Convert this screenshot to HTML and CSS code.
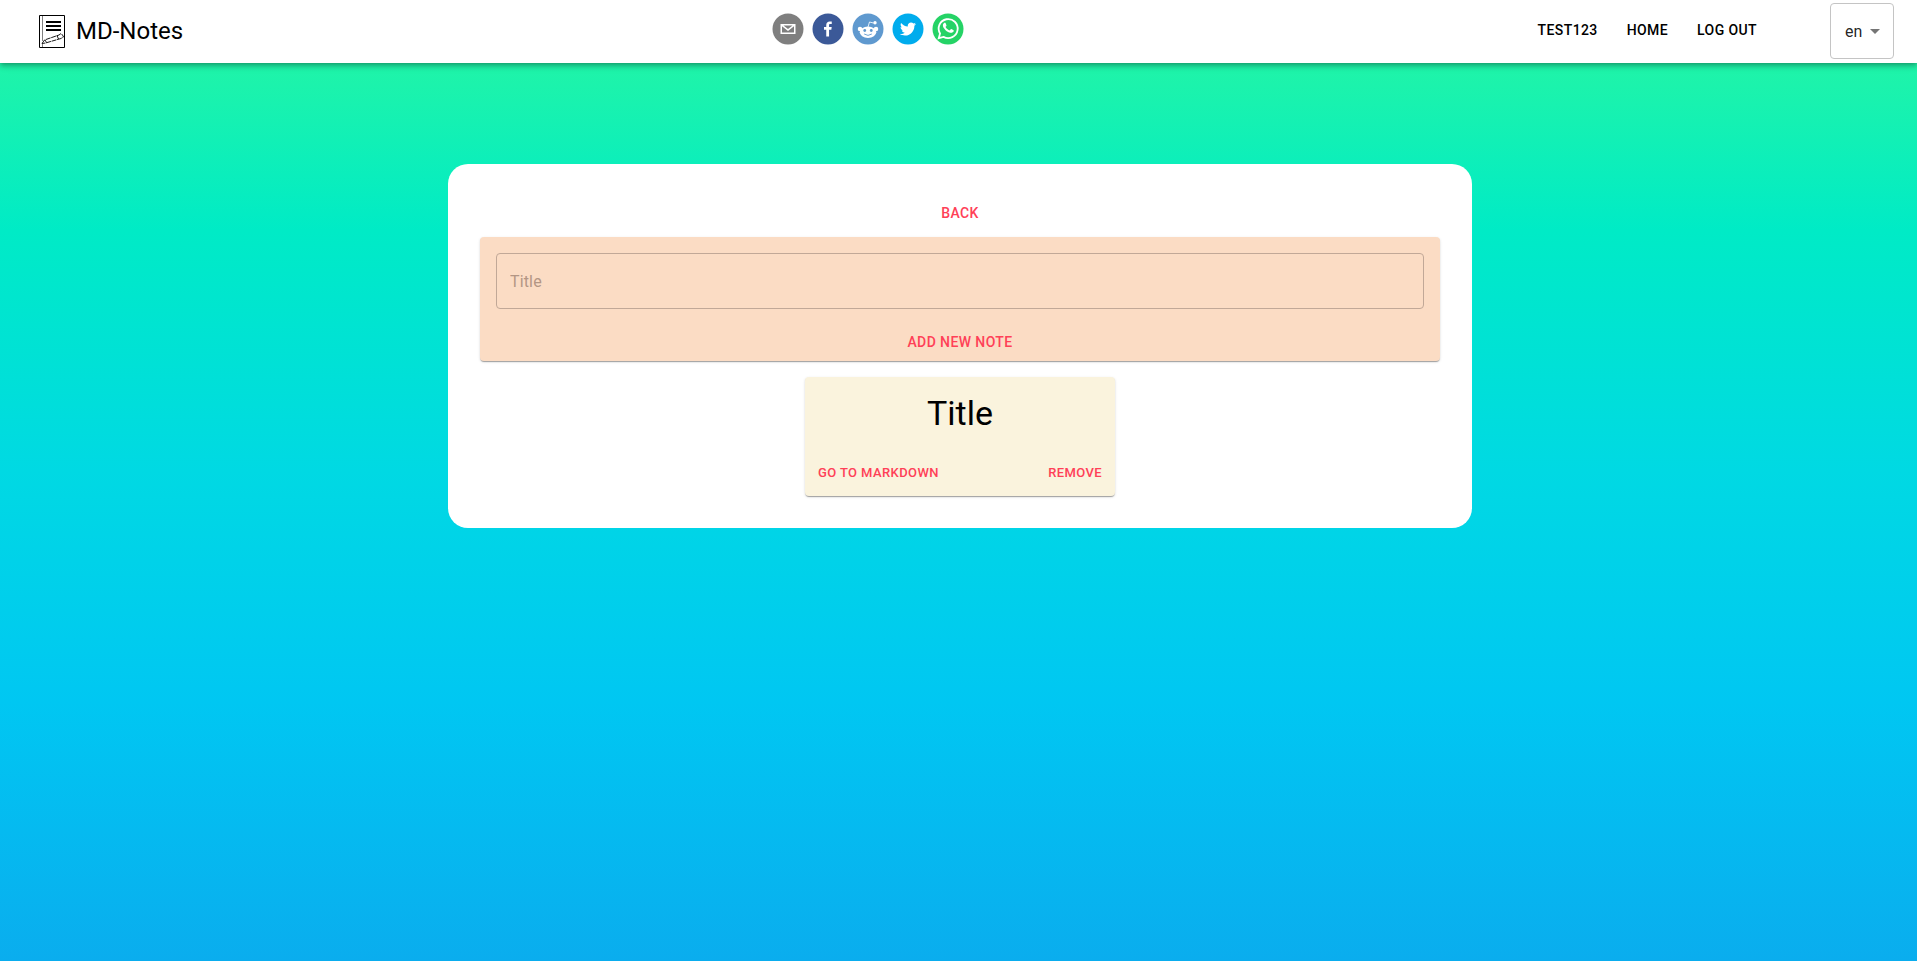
FILE: index.html
```html
<!DOCTYPE html>
<html lang="en">
<head>
<meta charset="utf-8">
<title>MD-Notes</title>
<link rel="stylesheet" href="styles.css">
</head>
<body>
<header class="bar">
  <a class="brand" href="#">
    <svg class="brand-logo" width="26" height="33" viewBox="0 0 26 33" fill="none" stroke="#000">
      <path d="M.5.5h25v32H.5z"/>
      <path d="M3.500 0v26M3.500 29v4" stroke-width=".5"/>
      <path d="M7 7h15M7 11h15M7 15h15" stroke-width="2"/>
      <path d="M3 28.500l2.500-3.500L20 20l2-1.500 1.500 1.500 1 2-2.500 1.500L6.500 28zM6 25l1.500 2.500M18 20.500l1.500 3.500" stroke-dasharray="5 .7" stroke-width=".9"/>
    </svg>
    <span>MD-Notes</span>
  </a>
  <div class="share">
    <button class="share-btn" aria-label="Email"><svg viewBox="0 0 64 64"><circle cx="32" cy="32" r="31" fill="#7f7f7f"/><path fill="#fff" d="M17 22v20h30V22H17zm24.100 3L32 32.100 22.900 25h18.200zM20 39V26.600l12 9.300 12-9.300V39H20z"/></svg></button>
    <button class="share-btn" aria-label="Facebook"><svg viewBox="0 0 64 64"><circle cx="32" cy="32" r="31" fill="#3b5998"/><path fill="#fff" d="M34.100 47V33.300h4.600l.7-5.300h-5.300v-3.400c0-1.500.4-2.600 2.600-2.600h2.800v-4.800c-.5-.1-2.200-.2-4.100-.2-4.100 0-6.900 2.500-6.900 7V28H24v5.300h4.500V47h5.600z"/></svg></button>
    <button class="share-btn" aria-label="Reddit"><svg viewBox="0 0 64 64"><circle cx="32" cy="32" r="31" fill="#5f99cf"/><ellipse cx="32" cy="38.500" rx="16.500" ry="11.500" fill="#fff"/><circle cx="16" cy="32" r="4.500" fill="#fff"/><circle cx="48" cy="32" r="4.500" fill="#fff"/><path d="M32 28l3-10 8 2" fill="none" stroke="#fff" stroke-width="1.700"/><circle cx="46" cy="19.500" r="3.400" fill="#fff"/><g fill="#5f99cf"><circle cx="25.500" cy="35" r="2.800"/><circle cx="38.500" cy="35" r="2.800"/></g><path d="M25 42.500q7 5 14 0" fill="none" stroke="#5f99cf" stroke-width="1.800" stroke-linecap="round"/></svg></button>
    <button class="share-btn" aria-label="Twitter"><svg viewBox="0 0 64 64"><circle cx="32" cy="32" r="31" fill="#00aced"/><path fill="#fff" d="M48 22.100c-1.200.5-2.400.9-3.800 1 1.400-.8 2.400-2.100 2.900-3.600-1.300.8-2.700 1.300-4.200 1.600-1.200-1.300-2.900-2.100-4.800-2.100-3.600 0-6.600 2.900-6.600 6.600 0 .5.100 1 .2 1.500-5.500-.3-10.300-2.900-13.500-6.900-.6 1-.9 2.100-.9 3.300 0 2.300 1.200 4.300 2.900 5.500-1.100 0-2.100-.3-3-.8v.1c0 3.200 2.300 5.800 5.300 6.400-.6.100-1.100.2-1.700.2-.4 0-.8 0-1.200-.1.800 2.600 3.300 4.500 6.100 4.600-2.200 1.800-5.100 2.800-8.200 2.800-.5 0-1.100 0-1.600-.1 2.900 1.900 6.400 2.900 10.100 2.900 12.100 0 18.700-10 18.700-18.700v-.8c1.300-.9 2.400-2.100 3.300-3.400z"/></svg></button>
    <button class="share-btn" aria-label="WhatsApp"><svg viewBox="0 0 64 64"><circle cx="32" cy="32" r="31" fill="#25d366"/><path fill="#fff" fill-rule="evenodd" d="M42.300 33.900c-.5-.3-3.100-1.500-3.600-1.700s-.8-.3-1.200.3c-.4.500-1.400 1.700-1.700 2-.3.400-.6.400-1.100.1s-2.200-.8-4.300-2.600c-1.600-1.400-2.700-3.100-3-3.700-.3-.5 0-.8.200-1.100l.8-.9c.3-.3.400-.5.500-.9.200-.4.100-.7 0-.9-.1-.3-1.200-2.900-1.600-3.900-.4-1-.9-.9-1.200-.9h-1c-.4 0-.9.100-1.400.7-.5.500-1.900 1.800-1.900 4.400 0 2.600 1.900 5.200 2.200 5.500.3.400 3.700 5.700 9.100 8 1.300.5 2.300.9 3 1.100 1.300.4 2.400.3 3.400.2 1-.2 3.100-1.300 3.600-2.500.4-1.200.4-2.300.3-2.500-.2-.3-.5-.4-1.100-.7z"/><path d="M13.500 50.300l2.600-9.300A19 19 0 1 1 23 47.700z" fill="none" stroke="#fff" stroke-width="3.600"/></svg></button>
  </div>
  <div class="side">
    <nav class="nav">
      <a href="#">TEST123</a>
      <a href="#">HOME</a>
      <a href="#">LOG OUT</a>
    </nav>
    <div class="lang">
      <select class="lang-select" aria-label="Language"><option>en</option></select>
      <svg class="lang-arrow" width="24" height="24" viewBox="0 0 24 24"><path d="M7 10l5 5 5-5z" fill="#757575"/></svg>
    </div>
  </div>
</header>
<main class="page">
  <section class="panel">
    <a class="btn" href="#">BACK</a>
    <form class="paper new-note">
      <input class="title-input" type="text" placeholder="Title" aria-label="Title">
      <button class="btn" type="button">ADD NEW NOTE</button>
    </form>
    <article class="paper note">
      <h1 class="note-title">Title</h1>
      <div class="note-actions">
        <a class="btn btn-small" href="#">GO TO MARKDOWN</a>
        <button class="btn btn-small" type="button">REMOVE</button>
      </div>
    </article>
  </section>
</main>
</body>
</html>
```
FILE: styles.css
```css
* { box-sizing: border-box; }
body {
  margin: 0;
  min-height: 100vh;
  font-family: Roboto, "Liberation Sans", sans-serif;
  font-size: 16px;
  color: #000;
  background: linear-gradient(180deg, #2af8a0 0%, #1ff4a9 7%, #00ebc6 24%, #00d9e3 49%, #00c7f2 73%, #0aadee 100%);
}
button, input, select { font-family: inherit; }
a { color: inherit; text-decoration: none; }
.bar {
  position: relative;
  display: flex;
  justify-content: space-between;
  align-items: center;
  min-height: 63px;
  padding: 0 23px 1px 39px;
  background: #fff;
  box-shadow: 0 2px 4px -1px rgba(0,0,0,.2), 0 4px 5px rgba(0,0,0,.14), 0 1px 10px rgba(0,0,0,.12);
}
.brand { display: flex; align-items: center; gap: 11px; padding-right: 16px; font-size: 24px; line-height: 32px; }
.share { display: flex; gap: 8px; padding-bottom: 4px; }
.share-btn { width: 32px; height: 32px; padding: 0; border: 0; background: none; cursor: pointer; }
.share-btn svg { display: block; width: 32px; height: 32px; }
.side { display: flex; justify-content: flex-end; align-items: center; gap: 73px; }
.nav { display: flex; gap: 29px; padding-bottom: 2px; font-size: 14px; font-weight: 500; line-height: 24px; letter-spacing: .4px; }
.lang { position: relative; }
.lang-select {
  display: block;
  appearance: none;
  width: 64px;
  height: 56px;
  padding: 0 14px;
  border: 1px solid #c4c4c4;
  border-radius: 4px;
  background: #fff;
  color: rgba(0,0,0,.87);
  font-size: 16px;
}
.lang-arrow { position: absolute; right: 7px; top: 16px; pointer-events: none; }
.page { padding: 101px 21px 40px 24px; }
.panel {
  display: flex;
  flex-direction: column;
  align-items: center;
  max-width: 1024px;
  margin: 0 auto;
  padding: 31px 32px 32px;
  background: #fff;
  border-radius: 20px;
}
.btn {
  padding: 6px 8px;
  border: 0;
  background: none;
  color: #ff4057;
  font-size: 14px;
  font-weight: 500;
  line-height: 24px;
  letter-spacing: .4px;
  cursor: pointer;
}
.btn-small { padding: 4px 5px; font-size: 13px; line-height: 22px; }
.paper {
  border-radius: 4px;
  box-shadow: 0 2px 1px -1px rgba(0,0,0,.2), 0 1px 1px rgba(0,0,0,.14), 0 1px 3px rgba(0,0,0,.12);
}
.new-note {
  display: flex;
  flex-direction: column;
  align-items: center;
  gap: 15px;
  width: 100%;
  margin: 6px 0 16px;
  padding: 16px 16px 1px;
  background: #fbdcc4;
}
.title-input {
  width: 100%;
  height: 56px;
  padding: 0 13px;
  border: 1px solid #c1a897;
  border-radius: 4px;
  background: none;
  font-size: 16px;
  letter-spacing: .15px;
}
.title-input::placeholder { color: #b39684; opacity: 1; }
.note { width: 310px; padding: 8px; background: #faf3dd; }
.note-title { margin: 0 0 17px; font-size: 34px; font-weight: 400; line-height: 56px; text-align: center; }
.note-actions { display: flex; justify-content: space-between; }
```
